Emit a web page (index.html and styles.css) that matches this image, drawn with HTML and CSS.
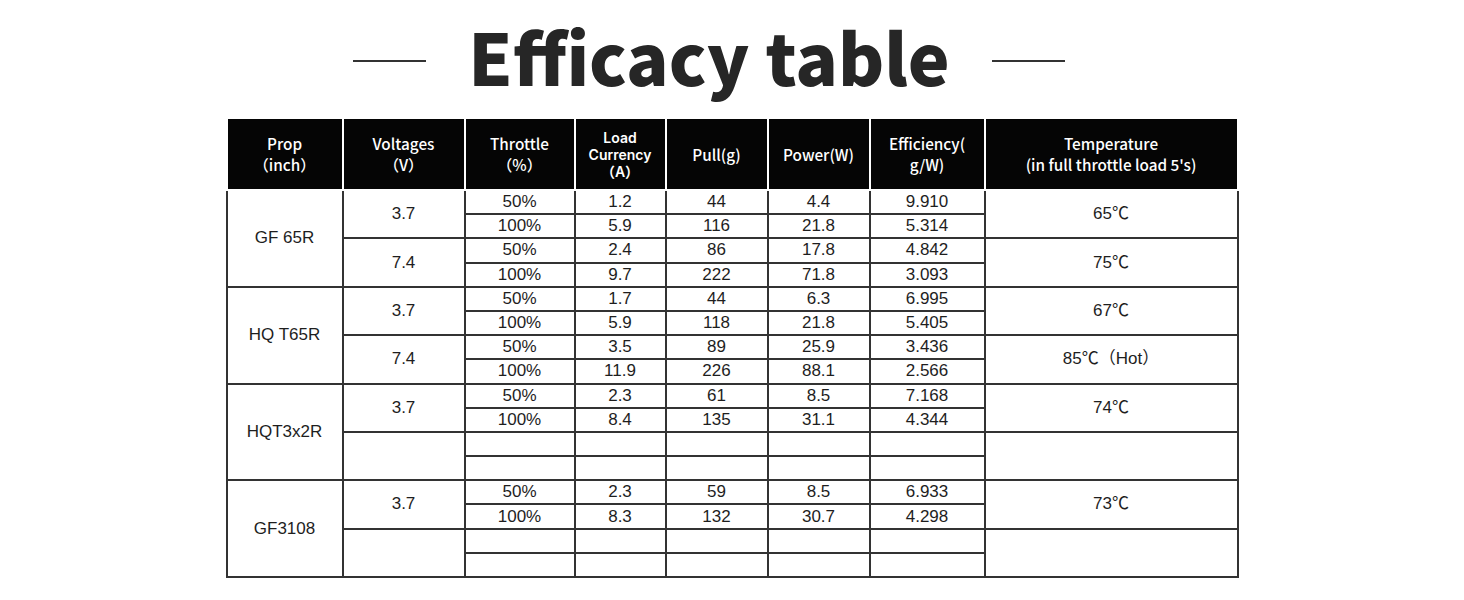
FILE: index.html
```html
<!DOCTYPE html>
<html lang="en">
<head>
<meta charset="utf-8">
<title>Efficacy table</title>
<link rel="stylesheet" href="styles.css">
</head>
<body>
<div class="page">
  <div class="heading">
    <span class="rule"></span>
    <h1 class="title">Efficacy table</h1>
    <span class="rule"></span>
  </div>
  <table class="eff">
    <colgroup>
      <col class="c1"><col class="c2"><col class="c3"><col class="c4"><col class="c5"><col class="c6"><col class="c7"><col class="c8">
    </colgroup>
    <thead>
      <tr>
        <th>Prop<br>（inch）</th>
        <th>Voltages<br>（V）</th>
        <th>Throttle<br>（%）</th>
        <th class="tight"><span class="ln">Load</span><span class="ln">Currency</span><span class="ln">（A）</span></th>
        <th>Pull(g)</th>
        <th>Power(W)</th>
        <th>Efficiency(<br>g/W)</th>
        <th>Temperature<br>(in full throttle load 5's)</th>
      </tr>
    </thead>
    <tbody>
      <tr><td rowspan="4">GF 65R</td><td rowspan="2">3.7</td><td>50%</td><td>1.2</td><td>44</td><td>4.4</td><td>9.910</td><td rowspan="2">65℃</td></tr>
      <tr><td>100%</td><td>5.9</td><td>116</td><td>21.8</td><td>5.314</td></tr>
      <tr><td rowspan="2">7.4</td><td>50%</td><td>2.4</td><td>86</td><td>17.8</td><td>4.842</td><td rowspan="2">75℃</td></tr>
      <tr><td>100%</td><td>9.7</td><td>222</td><td>71.8</td><td>3.093</td></tr>

      <tr><td rowspan="4">HQ T65R</td><td rowspan="2">3.7</td><td>50%</td><td>1.7</td><td>44</td><td>6.3</td><td>6.995</td><td rowspan="2">67℃</td></tr>
      <tr><td>100%</td><td>5.9</td><td>118</td><td>21.8</td><td>5.405</td></tr>
      <tr><td rowspan="2">7.4</td><td>50%</td><td>3.5</td><td>89</td><td>25.9</td><td>3.436</td><td rowspan="2">85℃（Hot）</td></tr>
      <tr><td>100%</td><td>11.9</td><td>226</td><td>88.1</td><td>2.566</td></tr>

      <tr><td rowspan="4">HQT3x2R</td><td rowspan="2">3.7</td><td>50%</td><td>2.3</td><td>61</td><td>8.5</td><td>7.168</td><td rowspan="2">74℃</td></tr>
      <tr><td>100%</td><td>8.4</td><td>135</td><td>31.1</td><td>4.344</td></tr>
      <tr><td rowspan="2"></td><td></td><td></td><td></td><td></td><td></td><td rowspan="2"></td></tr>
      <tr><td></td><td></td><td></td><td></td><td></td></tr>

      <tr><td rowspan="4">GF3108</td><td rowspan="2">3.7</td><td>50%</td><td>2.3</td><td>59</td><td>8.5</td><td>6.933</td><td rowspan="2">73℃</td></tr>
      <tr><td>100%</td><td>8.3</td><td>132</td><td>30.7</td><td>4.298</td></tr>
      <tr><td rowspan="2"></td><td></td><td></td><td></td><td></td><td></td><td rowspan="2"></td></tr>
      <tr><td></td><td></td><td></td><td></td><td></td></tr>
    </tbody>
  </table>
</div>
</body>
</html>
```
FILE: styles.css
```css
html, body {
  margin: 0;
  padding: 0;
  background: #fff;
}

.page {
  width: 1464px;
  padding-top: 19px;
}

.heading {
  display: flex;
  justify-content: center;
  align-items: flex-start;
  gap: 42px;
  padding-right: 46px;
  height: 72px;
}

.rule {
  width: 73px;
  height: 2px;
  background: #333;
  margin-top: 41px;
}

.title {
  margin: 0;
  font-family: "Noto Sans CJK SC", "Noto Sans", sans-serif;
  font-weight: 900;
  font-size: 70.5px;
  line-height: 72px;
  color: #262626;
}

.eff {
  margin: 26px auto 0;
  width: 1011px;
  table-layout: fixed;
  border-collapse: collapse;
  font-family: "Liberation Sans", Arial, "Noto Sans CJK SC", sans-serif;
  font-size: 17px;
  color: #1e1e1e;
}

.c1 { width: 116px; }
.c2 { width: 122px; }
.c3 { width: 110px; }
.c4 { width: 91px; }
.c5 { width: 102px; }
.c6 { width: 102px; }
.c7 { width: 115px; }
.c8 { width: 253px; }

.eff th {
  height: 70px;
  padding: 0;
  background: #050505;
  color: #fff;
  border: 2px solid #fff;
  font-family: "Noto Sans CJK SC", "Noto Sans", sans-serif;
  font-weight: 500;
  font-size: 15.3px;
  line-height: 21px;
  text-align: center;
  vertical-align: middle;
}

.eff th.tight {
  font-family: Inter, "Noto Sans CJK SC", sans-serif;
  font-weight: 600;
  font-size: 14px;
}

.ln {
  display: block;
  height: 17px;
  line-height: 17px;
}

.eff td {
  height: 22.2px;
  padding: 0;
  border: 2px solid #333;
  text-align: center;
  vertical-align: middle;
  line-height: 20px;
}
```
